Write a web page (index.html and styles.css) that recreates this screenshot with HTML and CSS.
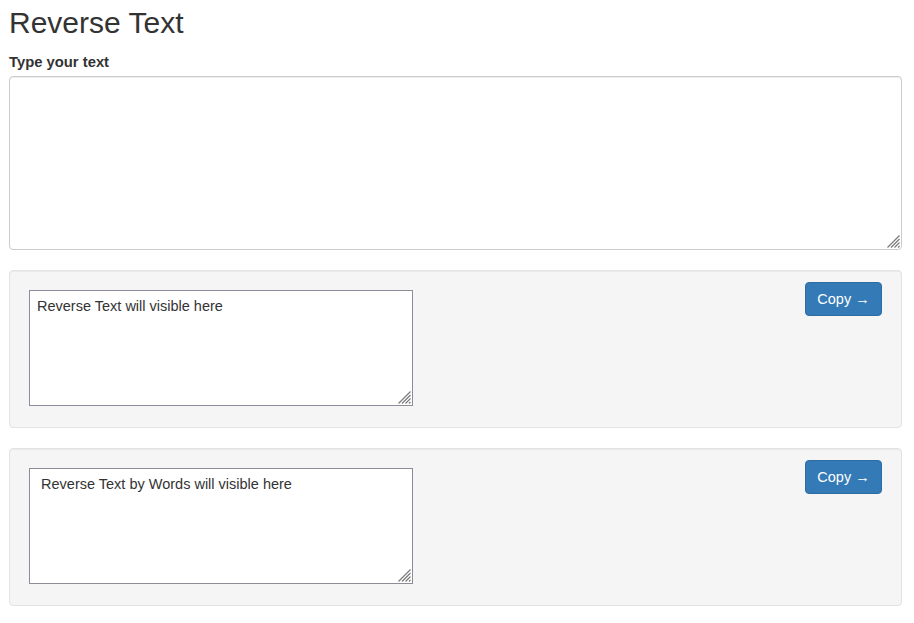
FILE: index.html
```html
<!DOCTYPE html>
<html lang="en">
<head>
<meta charset="utf-8">
<title>Reverse Text</title>
<link rel="stylesheet" href="styles.css">
</head>
<body>
<div class="page">
  <h2 class="title">Reverse Text</h2>
  <div class="form-group">
    <label class="label" for="src">Type your text</label>
    <div class="field field-main">
      <textarea id="src" class="main-input"></textarea>
      <svg class="grip" width="14" height="14" viewBox="0 0 14 14" aria-hidden="true">
        <path d="M1.5 13.5 L13.5 1.5 M5 13.5 L13.5 5 M8.5 13.5 L13.5 8.5 M12 13.5 L13.5 12" />
      </svg>
    </div>
  </div>
  <div class="well">
    <div class="field">
      <textarea class="result">Reverse Text will visible here</textarea>
      <svg class="grip" width="14" height="14" viewBox="0 0 14 14" aria-hidden="true">
        <path d="M1.5 13.5 L13.5 1.5 M5 13.5 L13.5 5 M8.5 13.5 L13.5 8.5 M12 13.5 L13.5 12" />
      </svg>
    </div>
    <button class="btn-copy" type="button">Copy &rarr;</button>
  </div>
  <div class="well">
    <div class="field">
      <textarea class="result"> Reverse Text by Words will visible here</textarea>
      <svg class="grip" width="14" height="14" viewBox="0 0 14 14" aria-hidden="true">
        <path d="M1.5 13.5 L13.5 1.5 M5 13.5 L13.5 5 M8.5 13.5 L13.5 8.5 M12 13.5 L13.5 12" />
      </svg>
    </div>
    <button class="btn-copy" type="button">Copy &rarr;</button>
  </div>
</div>
</body>
</html>
```
FILE: styles.css
```css
* { box-sizing: border-box; }
html, body { margin: 0; padding: 0; background: #fff; }
body {
  font-family: "Liberation Sans", Arial, Helvetica, sans-serif;
  font-size: 14px;
  line-height: 1.42857;
  color: #333;
}
.page {
  padding: 6px 12px 0 9px;
}
.title {
  margin: 0 0 13px 0;
  font-size: 30px;
  font-weight: 400;
  line-height: 1.1;
  color: #333;
}
.form-group {
  margin-bottom: 20px;
}
.label {
  display: block;
  font-weight: 700;
  font-size: 14.8px;
  line-height: 20px;
  margin-bottom: 4px;
}
.field {
  position: relative;
}
.field-main {
  width: 100%;
}
.main-input {
  display: block;
  width: 100%;
  height: 174px;
  border: 1px solid #ccc;
  border-radius: 4px;
  padding: 6px 12px;
  font: inherit;
  color: #555;
  background: #fff;
  resize: none;
  box-shadow: inset 0 1px 1px rgba(0,0,0,.075);
}
.grip {
  position: absolute;
  right: 2px;
  bottom: 2px;
  pointer-events: none;
}
.grip path {
  stroke: #7a7a7a;
  stroke-width: 1.2;
  fill: none;
}
.well .grip {
  bottom: 4px;
}
.well {
  display: flex;
  justify-content: space-between;
  align-items: flex-start;
  padding: 19px;
  margin-bottom: 20px;
  background: #f5f5f5;
  border: 1px solid #e3e3e3;
  border-radius: 4px;
  box-shadow: inset 0 1px 1px rgba(0,0,0,.05);
}
.result {
  display: block;
  width: 384px;
  height: 116px;
  margin: 0 0 2px 0;
  padding: 5px 7px;
  border: 1px solid #8e8c9a;
  border-radius: 0;
  font-family: "Liberation Sans", Arial, sans-serif;
  font-size: 14.5px;
  line-height: 20px;
  color: #333;
  background: #fff;
  resize: none;
}
.btn-copy {
  margin-top: -8px;
  height: 34px;
  width: 77px;
  padding: 6px 0;
  font-family: "Liberation Sans", Arial, sans-serif;
  font-size: 14.5px;
  line-height: 20px;
  color: #fff;
  background: #337ab7;
  border: 1px solid #2e6da4;
  border-radius: 4px;
  cursor: pointer;
  text-align: center;
}
```
